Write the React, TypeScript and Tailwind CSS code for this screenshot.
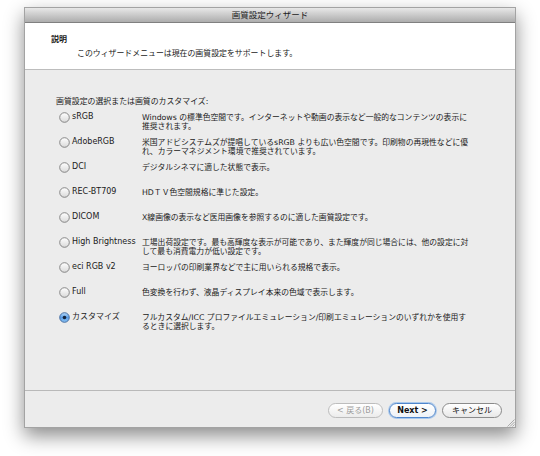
const OPTIONS = [
  {
    label: 'sRGB',
    desc: ['Windows の標準色空間です。インターネットや動画の表示など一般的なコンテンツの表示に', '推奨されます。'],
  },
  {
    label: 'AdobeRGB',
    desc: ['米国アドビシステムズが提唱しているsRGB よりも広い色空間です。印刷物の再現性などに優', 'れ、カラーマネジメント環境で推奨されています。'],
  },
  { label: 'DCI', desc: ['デジタルシネマに適した状態で表示。'] },
  { label: 'REC-BT709', desc: ['HDＴＶ色空間規格に準じた設定。'] },
  { label: 'DICOM', desc: ['X線画像の表示など医用画像を参照するのに適した画質設定です。'] },
  {
    label: 'High Brightness',
    desc: ['工場出荷設定です。最も高輝度な表示が可能であり、また輝度が同じ場合には、他の設定に対', 'して最も消費電力が低い設定です。'],
  },
  { label: 'eci RGB v2', desc: ['ヨーロッパの印刷業界などで主に用いられる規格で表示。'] },
  { label: 'Full', desc: ['色変換を行わず、液晶ディスプレイ本来の色域で表示します。'] },
  {
    label: 'カスタマイズ',
    desc: ['フルカスタム/ICC プロファイルエミュレーション/印刷エミュレーションのいずれかを使用す', 'るときに選択します。'],
    checked: true,
  },
];

function Radio({ checked }: { checked?: boolean }) {
  return (
    <svg width="11" height="11" viewBox="0 0 11 11" className="shrink-0">
      <defs>
        <linearGradient id="off" x1="0" y1="0" x2="0" y2="1">
          <stop offset="0" stopColor="#ffffff" />
          <stop offset="1" stopColor="#d9d9d9" />
        </linearGradient>
        <linearGradient id="on" x1="0" y1="0" x2="0" y2="1">
          <stop offset="0" stopColor="#b9dcfa" />
          <stop offset="0.5" stopColor="#5b9de6" />
          <stop offset="1" stopColor="#8cc4f4" />
        </linearGradient>
      </defs>
      {checked ? (
        <>
          <circle cx="5.5" cy="5.5" r="4.8" fill="url(#on)" stroke="#3c649a" strokeWidth="0.9" />
          <circle cx="5.5" cy="5.5" r="1.8" fill="#15243a" />
        </>
      ) : (
        <circle cx="5.5" cy="5.5" r="4.8" fill="url(#off)" stroke="#7c7c7c" strokeWidth="0.9" />
      )}
    </svg>
  );
}

export default function App() {
  return (
    <div
      className="w-[540px] h-[456px] bg-white pt-[7px] pl-[24px] text-[#1a1a1a]"
      style={{ fontFamily: '"DejaVu Sans", "Noto Sans CJK JP", sans-serif' }}
    >
      <div className="relative w-[492px] h-[421px] flex flex-col border border-[#a3a3a3] bg-[#ececec] shadow-[0_8px_18px_rgba(0,0,0,0.45)]">
        {/* Title bar */}
        <div className="h-[15px] flex items-center justify-center bg-gradient-to-b from-[#e8e8e8] to-[#adadad] border-b border-[#808080]">
          <span className="text-[8.5px] leading-[10px] text-[#222]">画質設定ウィザード</span>
        </div>

        {/* Header */}
        <div className="h-[47px] bg-white border-b border-[#bdbdbd] pt-[12px] pl-[26px]">
          <div className="text-[8px] leading-[10px] font-bold">説明</div>
          <div className="mt-[4px] ml-[26px] text-[7.9px] leading-[10px]">
            このウィザードメニューは現在の画質設定をサポートします。
          </div>
        </div>

        {/* Options */}
        <div className="flex-1 pt-[27px] pl-[31px]">
          <div className="text-[7.9px] leading-[10px]">画質設定の選択または画質のカスタマイズ:</div>
          <div className="mt-[5px] flex flex-col">
            {OPTIONS.map((o) => (
              <div key={o.label} className="h-[25px] flex items-start">
                <div className="w-[83px] ml-[3px] h-[10px] flex items-center gap-[2px]">
                  <Radio checked={o.checked} />
                  <span className="text-[8px] leading-[10px] whitespace-nowrap">{o.label}</span>
                </div>
                <div className="text-[7.8px] leading-[9px] whitespace-nowrap pt-[0.5px]">
                  {o.desc.map((line) => (
                    <div key={line}>{line}</div>
                  ))}
                </div>
              </div>
            ))}
          </div>
        </div>

        {/* Footer */}
        <div className="h-[37px] border-t border-[#b9b9b9] pt-[12px] pr-[13px] flex justify-end gap-[6px]">
          <button className="w-[55px] h-[15px] rounded-full border border-[#bdbdbd] bg-gradient-to-b from-white to-[#ececec] text-[8px] leading-[10px] text-[#9d9d9d]">
            &lt; 戻る(B)
          </button>
          <button className="w-[47px] h-[15px] rounded-full border border-[#4f86cc] shadow-[0_0_0_1px_#a9c8ec] bg-gradient-to-b from-white to-[#eef2f7] text-[8px] leading-[10px] font-bold text-[#111]">
            Next &gt;
          </button>
          <button className="w-[60px] h-[15px] rounded-full border border-[#8a8a8a] bg-gradient-to-b from-white to-[#e8e8e8] text-[8px] leading-[10px] text-[#111]">
            キャンセル
          </button>
        </div>

        {/* Resize grip */}
        <svg width="10" height="10" viewBox="0 0 10 10" className="absolute right-0 bottom-0">
          <path d="M9.5 2.5 L2.5 9.5 M9.5 5 L5 9.5 M9.5 7.5 L7.5 9.5" stroke="#9a9a9a" strokeWidth="0.8" />
        </svg>
      </div>
    </div>
  );
}
